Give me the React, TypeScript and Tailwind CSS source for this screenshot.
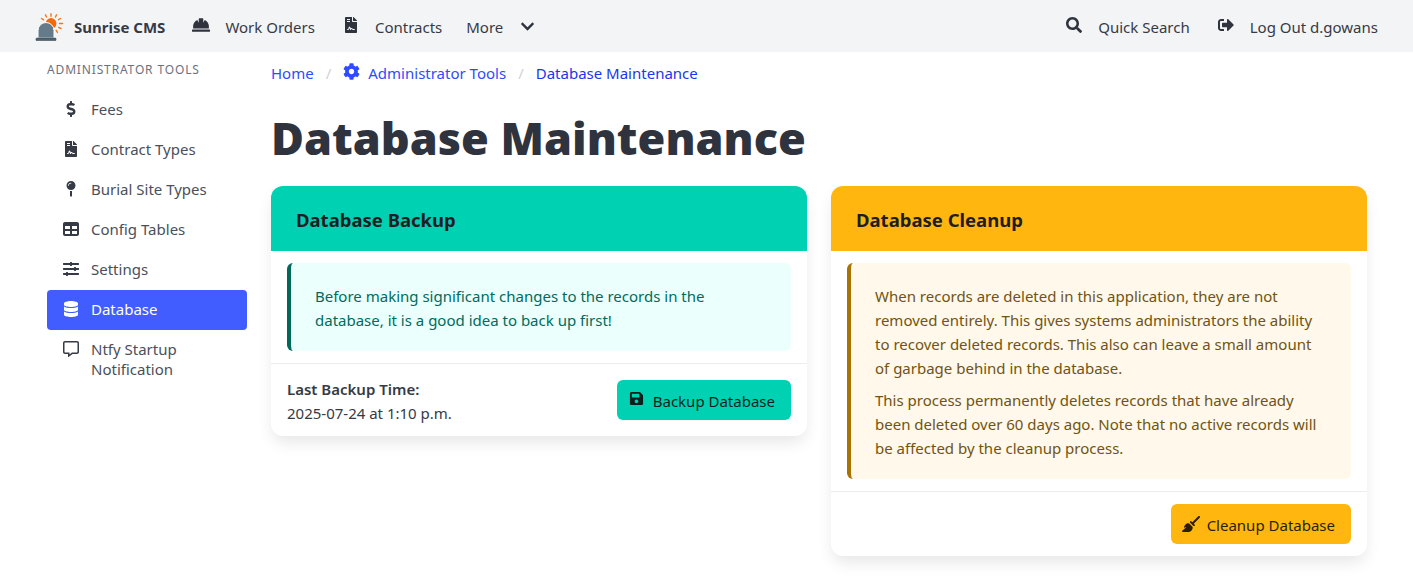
import type { ReactNode } from 'react'
import {
  FaBroom,
  FaTable,
} from 'react-icons/fa6'
import {
  FaChevronDown,
  FaCog,
  FaDatabase,
  FaDollarSign,
  FaFileContract,
  FaHardHat,
  FaMapPin,
  FaRegCommentAlt,
  FaSave,
  FaSearch,
  FaSignOutAlt,
  FaSlidersH,
} from 'react-icons/fa'

const sideItems = [
  { label: 'Fees', icon: <FaDollarSign /> },
  { label: 'Contract Types', icon: <FaFileContract /> },
  { label: 'Burial Site Types', icon: <FaMapPin /> },
  { label: 'Config Tables', icon: <FaTable /> },
  { label: 'Settings', icon: <FaSlidersH /> },
  { label: 'Database', icon: <FaDatabase />, active: true },
  { label: 'Ntfy Startup Notification', icon: <FaRegCommentAlt /> },
]

function Logo() {
  return (
    <svg viewBox="0 0 30 28" className="w-[30px] h-[28px]">
      <g stroke="#f97316" strokeWidth="1.4" strokeLinecap="round">
        <path d="M16 .8v2.400M21.500 1.800l-1 2.200M10.500 1.800l1 2.200M25.500 5.500l-2 1.200M27.500 10.500h-3M26 15.500l-2.300-1.100M22.500 19.500l-1.300-2.200M6.500 5.500l2 1.300" />
      </g>
      <circle cx="16" cy="10.500" r="5.400" fill="#f26a0a" />
      <path d="M3 25V17.500a8 8 0 0 1 16 0V25z" fill="#647c8a" stroke="#fff" strokeWidth="1" />
      <path d="M1 26a1 1 0 0 1 1-1h18a1 1 0 0 1 1 1v1a.8.8 0 0 1-1 .6H2a.8.8 0 0 1-1-.6z" fill="#4f6472" stroke="#36454f" strokeWidth=".6" />
    </svg>
  )
}

function NavItem({ icon, children }: { icon: ReactNode; children: ReactNode }) {
  return (
    <a className="flex items-center gap-3 text-[#363a45]">
      <span className="w-6 flex justify-center -mt-1 text-[#2f333e]">{icon}</span>
      <span>{children}</span>
    </a>
  )
}

function Card({
  title,
  headerClass,
  alertClass,
  children,
  footer,
}: {
  title: string
  headerClass: string
  alertClass: string
  children: ReactNode
  footer: ReactNode
}) {
  return (
    <div className="rounded-[12px] bg-white shadow-[0_8px_16px_-2px_rgba(10,10,10,0.1),0_0_0_0_rgba(10,10,10,0.02)] self-start">
      <div className={`h-[65px] flex items-center px-[25px] pt-0.5 rounded-t-[12px] text-[18.500px] font-bold text-[#1c1e24] ${headerClass}`}>{title}</div>
      <div className="px-4 py-3">
        <div className={`rounded-[6px] border-l-4 px-6 pt-[21px] pb-[19px] ${alertClass}`}>{children}</div>
      </div>
      <div className="border-t border-[#ebecef] px-4 py-3">{footer}</div>
    </div>
  )
}

export default function App() {
  return (
    <div className="min-h-[581px] bg-white text-[15px] leading-6 text-[#363a45] font-['Noto_Sans','Open_Sans',sans-serif]">
      <nav className="h-[52px] bg-[#f3f4f6] flex items-center justify-between pl-[35px] pr-[35px] pt-0.5">
        <div className="flex items-center gap-6">
          <a className="flex items-center gap-[9px] font-bold text-[#363a45]">
            <Logo />
            <span>Sunrise CMS</span>
          </a>
          <NavItem icon={<FaHardHat className="text-[18px]" />}>Work Orders</NavItem>
          <NavItem icon={<FaFileContract className="text-[16px]" />}>Contracts</NavItem>
          <a className="flex items-center gap-3">
            <span>More</span>
            <span className="w-6 flex justify-center text-[15px] text-[#2f333e] -mt-0.5">
              <FaChevronDown />
            </span>
          </a>
        </div>
        <div className="flex items-center gap-6">
          <NavItem icon={<FaSearch className="text-[16px]" />}>Quick Search</NavItem>
          <NavItem icon={<FaSignOutAlt className="text-[16px]" />}>Log Out d.gowans</NavItem>
        </div>
      </nav>

      <div className="flex pl-[47px]">
        <aside className="w-[200px] shrink-0 pt-[9px]">
          <p className="text-[12px] tracking-[0.85px] leading-[18px] text-[#6b7180] uppercase">Administrator Tools</p>
          <ul className="mt-[11px] flex flex-col">
            {sideItems.map((item) => (
              <li key={item.label}>
                <a
                  className={`flex rounded-[4px] pl-4 pr-2 pt-[9px] pb-[11px] leading-[20px] ${
                    item.active ? 'bg-[#415cff] text-white' : 'text-[#4a4f5c]'
                  }`}
                >
                  <span className={`w-[28px] shrink-0 pt-[2px] text-[16px] ${item.active ? 'text-white' : 'text-[#363a45]'}`}>{item.icon}</span>
                  <span>{item.label}</span>
                </a>
              </li>
            ))}
          </ul>
        </aside>

        <main className="ml-6 w-[1096px]">
          <div className="flex items-center h-[41px] text-[#2f4bff]">
            <a>Home</a>
            <span className="mx-3 text-[#cfd2d9]">/</span>
            <a className="flex items-center gap-2">
              <FaCog className="text-[17px] -mt-0.5" />
              Administrator Tools
            </a>
            <span className="mx-3 text-[#cfd2d9]">/</span>
            <a className="text-[#1a35f0]">Database Maintenance</a>
          </div>
          <h1 className="mt-[15px] text-[45px] leading-[60px] font-black text-[#2f333e]">Database Maintenance</h1>
          <div className="mt-[18px] grid grid-cols-2 gap-6">
            <Card
              title="Database Backup"
              headerClass="bg-[#00d1b2]"
              alertClass="bg-[#ebfffc] border-[#00695a] text-[#006b5c]"
              footer={
                <div className="flex items-center justify-between">
                  <div className="pt-px -mb-px">
                    <p className="font-semibold">Last Backup Time:</p>
                    <p>2025-07-24 at 1:10 p.m.</p>
                  </div>
                  <button className="h-10 pl-[12px] pr-4 pt-0.5 rounded-[6px] bg-[#00d1b2] text-[#0c1f1c] flex items-center gap-[9px]">
                    <FaSave className="text-[15px] -mt-1.5" />
                    Backup Database
                  </button>
                </div>
              }
            >
              <p>Before making significant changes to the records in the database, it is a good idea to back up first!</p>
            </Card>
            <Card
              title="Database Cleanup"
              headerClass="bg-[#ffb70f]"
              alertClass="bg-[#fff8eb] border-[#a87300] text-[#705410]"
              footer={
                <div className="flex justify-end">
                  <button className="h-10 pl-[11px] pr-4 pt-0.5 rounded-[6px] bg-[#ffb70f] text-[#2b1f00] flex items-center gap-[7px]">
                    <FaBroom className="text-[18px] -mt-0.5" />
                    Cleanup Database
                  </button>
                </div>
              }
            >
              <p>
                When records are deleted in this application, they are not removed entirely. This gives systems administrators the ability to
                recover deleted records. This also can leave a small amount of garbage behind in the database.
              </p>
              <p className="mt-2">
                This process permanently deletes records that have already been deleted over 60 days ago. Note that no active records will be
                affected by the cleanup process.
              </p>
            </Card>
          </div>
        </main>
      </div>
    </div>
  )
}
